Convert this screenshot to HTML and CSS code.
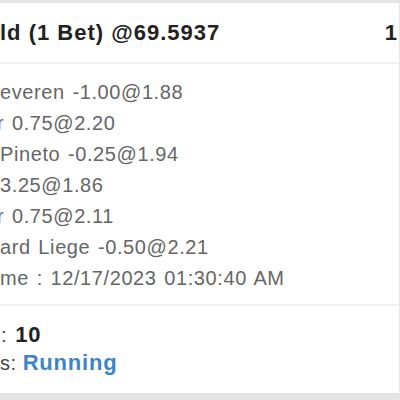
FILE: index.html
```html
<!DOCTYPE html>
<html lang="en">
<head>
    <meta charset="UTF-8">
    <meta name="viewport" content="width=device-width, initial-scale=1.0">
    <title>Bet</title>
    <link rel="stylesheet" href="styles.css">
</head>
<body>
    <div class="card">
        <!-- 标题 -->
        <div class="card-head">
            <div class="title">ld (1 Bet) @69.5937</div>
            <div class="count">1</div>
        </div>
        <!-- 投注明细 -->
        <div class="card-body">
            <div class="line">everen -1.00@1.88</div>
            <div class="line cut">r 0.75@2.20</div>
            <div class="line">Pineto -0.25@1.94</div>
            <div class="line">3.25@1.86</div>
            <div class="line cut">r 0.75@2.11</div>
            <div class="line">ard Liege -0.50@2.21</div>
            <div class="line">me : 12/17/2023 01:30:40 AM</div>
        </div>
        <div class="card-foot">
            <div class="row"><span class="label first">:</span> <b class="stake">10</b></div>
            <div class="row"><span class="label">s:</span> <b class="status">Running</b></div>
        </div>
    </div>
</body>
</html>
```

FILE: styles.css
```css
* {
    margin: 0;
    padding: 0;
    box-sizing: border-box;
}

html,
body {
    width: 100%;
    height: 100%;
}

body {
    background: #e5e5e5;
    font-family: "Liberation Sans", Arial, sans-serif;
    padding-top: 3px;
    overflow: hidden;
}

.card {
    width: 399px;
    height: 390px;
    background: #fff;
}

.card-head {
    display: flex;
    justify-content: space-between;
    align-items: center;
    height: 61px;
    border-bottom: 2px solid #f0f0f0;
    padding-right: 2px;
}

.title {
    font-size: 22px;
    font-weight: bold;
    letter-spacing: 1px;
    color: #222;
}

.count {
    font-size: 22px;
    font-weight: bold;
    color: #222;
}

.card-body {
    padding-top: 13px;
    height: 242px;
    border-bottom: 2px solid #f0f0f0;
}

.line {
    font-size: 20px;
    line-height: 31px;
    letter-spacing: 0.6px;
    word-spacing: 1.5px;
    color: #666;
}

.line.cut {
    margin-left: -3px;
}

.card-foot {
    padding-top: 15px;
}

.row {
    font-size: 20px;
    line-height: 27px;
    letter-spacing: 0.5px;
    color: #444;
}

.label.first {
    margin-left: 1px;
    margin-right: 2px;
}

.stake {
    font-size: 22px;
    letter-spacing: 0.8px;
    color: #222;
}

.status {
    font-size: 22px;
    letter-spacing: 0.8px;
    color: #3d85c6;
}
```
